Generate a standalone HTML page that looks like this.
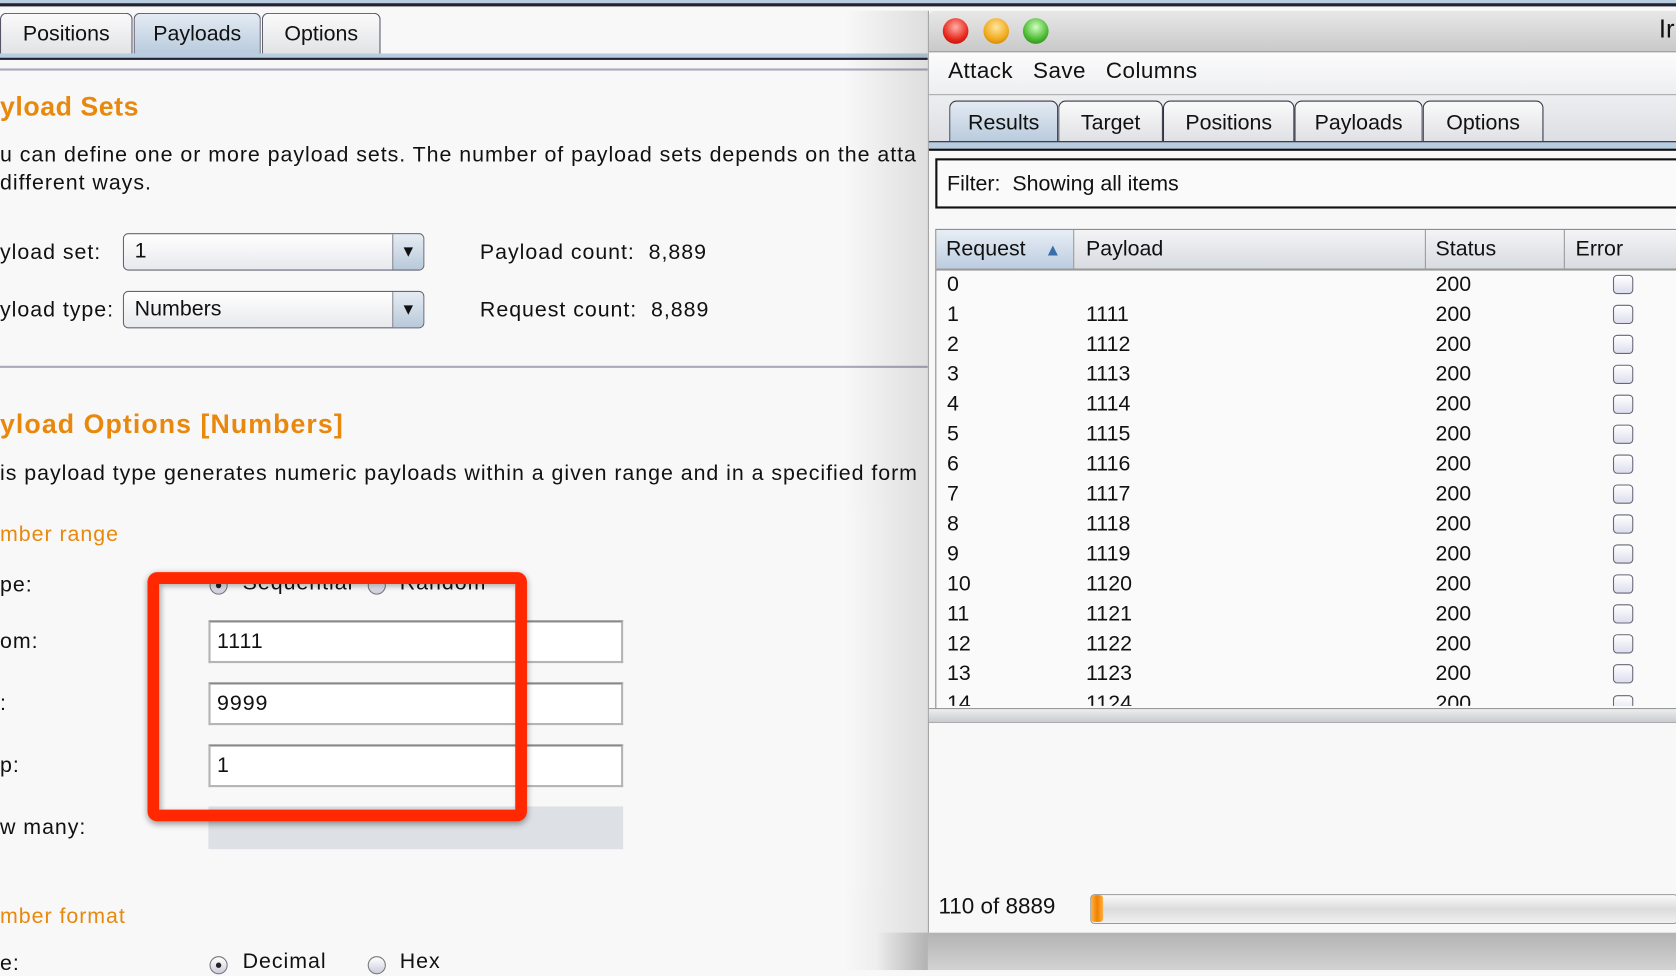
<!DOCTYPE html>
<html><head><meta charset="utf-8"><style>
html,body{margin:0;padding:0;width:1676px;height:970px;overflow:hidden;background:#f8f8f8}
#s{position:absolute;left:0;top:0;width:1568px;height:907px;transform:scale(1.0689,1.0695);transform-origin:0 0;font-family:"Liberation Sans",sans-serif;color:#111;font-size:20px}
.a{position:absolute;white-space:nowrap}
.l{letter-spacing:0.9px}
.or{color:#e8880c}
.tab{position:absolute;top:12px;height:38px;border:1px solid #556;border-bottom:none;border-radius:6px 6px 0 0;background:linear-gradient(#fafafa,#e2e3e6);font-size:20px;line-height:38px;text-align:center;box-sizing:border-box}
.combo{position:absolute;left:115px;width:282px;height:35px;border:1px solid #667;border-radius:5px;background:linear-gradient(#fff,#e8e9ec);box-sizing:border-box;font-size:20px;line-height:33px;padding-left:10px}
.combo:after{content:"▼";position:absolute;right:0;top:0;width:28px;height:33px;border-left:1px solid #667;text-align:center;font-size:15px;background:linear-gradient(#e6ecf3,#b8c9da);border-radius:0 4px 4px 0}
.inp{position:absolute;left:195px;width:388px;height:40px;border:2px solid #b5b5b5;border-top-color:#888;background:#fff;box-sizing:border-box;font-size:20px;line-height:36px;padding-left:6px}
.rad{position:absolute;width:17px;height:17px;border-radius:50%;border:1px solid #777;background:linear-gradient(#fff,#ccd);box-sizing:border-box}
.dot:after{content:"";position:absolute;left:5px;top:5px;width:5px;height:5px;border-radius:50%;background:#222}
.rt{position:absolute;height:38px;top:94px;border:1.5px solid #334;border-bottom:none;border-radius:7px 7px 0 0;background:linear-gradient(#fafafa,#e0e1e5);font-size:20px;line-height:40px;text-align:center;box-sizing:border-box}
.tab.sel,.rt.sel{background:linear-gradient(#e4ebf3,#b9cbdd)}
.row{position:absolute;left:886px;height:28px;line-height:28px;font-size:20px}
.cb{position:absolute;left:1509px;width:19px;height:18px;border:1.5px solid #667;border-radius:4px;background:linear-gradient(#fff,#dde);box-sizing:border-box}
</style></head><body><div id="s">
<div class="a" style="left:0;top:0;width:1568px;height:3px;background:#b9cde0"></div>
<div class="a" style="left:0;top:3px;width:1568px;height:3px;background:#223"></div>
<div class="tab" style="left:0;width:124px">Positions</div>
<div class="tab sel" style="left:125px;width:119px">Payloads</div>
<div class="tab" style="left:245px;width:111px">Options</div>
<div class="a" style="left:0;top:50px;width:868px;height:4px;background:#b9cde0;border-bottom:2px solid #223"></div>
<div class="a" style="left:0;top:64px;width:868px;height:2px;background:#aab"></div>
<div class="a or" style="left:0;top:86px;font-size:25px;font-weight:bold;letter-spacing:0.5px">yload Sets</div>
<div class="a l" style="left:0;top:134px">u can define one or more payload sets. The number of payload sets depends on the atta</div>
<div class="a l" style="left:0;top:160px">different ways.</div>
<div class="a l" style="left:0;top:225px">yload set:</div>
<div class="combo" style="top:218px">1</div>
<div class="a l" style="left:449px;top:225px">Payload count:&nbsp; 8,889</div>
<div class="a l" style="left:0;top:279px">yload type:</div>
<div class="combo" style="top:272px">Numbers</div>
<div class="a l" style="left:449px;top:279px">Request count:&nbsp; 8,889</div>
<div class="a" style="left:0;top:342px;width:868px;height:2px;background:#aab"></div>
<div class="a or" style="left:0;top:383px;font-size:25px;font-weight:bold;letter-spacing:1px">yload Options [Numbers]</div>
<div class="a l" style="left:0;top:432px">is payload type generates numeric payloads within a given range and in a specified form</div>
<div class="a or l" style="left:0;top:489px">mber range</div>
<div class="a l" style="left:0;top:536px">pe:</div>
<div class="rad dot" style="left:196px;top:539px"></div><div class="a l" style="left:227px;top:534px">Sequential</div>
<div class="rad" style="left:344px;top:539px"></div><div class="a l" style="left:374px;top:534px">Random</div>
<div class="a l" style="left:0;top:589px">om:</div><div class="inp l" style="top:580px">1111</div>
<div class="a" style="left:0;top:647px">:</div><div class="inp l" style="top:638px">9999</div>
<div class="a l" style="left:0;top:705px">p:</div><div class="inp" style="top:696px">1</div>
<div class="a l" style="left:0;top:763px">w many:</div>
<div class="a" style="left:195px;top:754px;width:388px;height:40px;background:#dde0e5"></div>
<div class="a" style="left:138px;top:535px;width:355px;height:233px;border:11px solid #ff2800;border-radius:9px;box-sizing:border-box;box-shadow:0 2px 6px rgba(0,0,0,.4),inset 2px 2px 5px rgba(0,0,0,.3)"></div>
<div class="a or l" style="left:0;top:846px">mber format</div>
<div class="a l" style="left:0;top:890px">e:</div>
<div class="rad dot" style="left:196px;top:894px"></div><div class="a l" style="left:227px;top:888px">Decimal</div>
<div class="rad" style="left:344px;top:894px"></div><div class="a l" style="left:374px;top:888px">Hex</div>
<!-- shadows -->
<div class="a" style="left:790px;top:10px;width:78px;height:897px;background:linear-gradient(90deg,rgba(0,0,0,0),rgba(0,0,0,.10))"></div>
<div class="a" style="left:868px;top:872px;width:700px;height:35px;background:linear-gradient(rgba(0,0,0,.28),rgba(0,0,0,.15))"></div>
<div class="a" style="left:820px;top:872px;width:48px;height:35px;background:linear-gradient(90deg,rgba(0,0,0,0),rgba(0,0,0,.2))"></div>
<!-- window -->
<div class="a" style="left:868px;top:10px;width:700px;height:862px;background:#f8f8f8;border-left:1px solid #999"></div>
<div class="a" style="left:869px;top:10px;width:699px;height:38px;background:linear-gradient(#e8e8e8,#c9c9c9);border-bottom:1px solid #777;border-radius:5px 0 0 0"></div>
<div class="a" style="left:882px;top:17px;width:24px;height:24px;border-radius:50%;background:radial-gradient(circle at 50% 35%,#ffb0a8,#e6261a 60%,#a00);"></div>
<div class="a" style="left:920px;top:17px;width:24px;height:24px;border-radius:50%;background:radial-gradient(circle at 50% 35%,#ffe6a0,#f0a818 60%,#b07000);"></div>
<div class="a" style="left:957px;top:17px;width:24px;height:24px;border-radius:50%;background:radial-gradient(circle at 50% 35%,#d0ffc0,#48b830 60%,#207010);"></div>
<div class="a" style="left:1552px;top:14px;font-size:24px">Ir</div>
<div class="a" style="left:869px;top:49px;width:699px;height:85px;background:linear-gradient(#fcfcfc,#dcdee3)"></div>
<div class="a" style="left:869px;top:88px;width:699px;height:1px;background:#aaa"></div>
<div class="a" style="left:887px;top:55px;font-size:21px;letter-spacing:0.4px">Attack&nbsp;&nbsp; Save&nbsp;&nbsp; Columns</div>
<div class="rt sel" style="left:888px;width:102px">Results</div>
<div class="rt" style="left:990px;width:98px">Target</div>
<div class="rt" style="left:1088px;width:123px">Positions</div>
<div class="rt" style="left:1211px;width:120px">Payloads</div>
<div class="rt" style="left:1331px;width:113px">Options</div>
<div class="a" style="left:869px;top:132px;width:699px;height:6px;background:#b9cde0;border-top:1.5px solid #223;border-bottom:2px solid #111"></div>
<div class="a" style="left:875px;top:148px;width:700px;height:47px;border:2px solid #111;background:#fafafa;box-sizing:border-box;font-size:20px;line-height:44px;padding-left:9px">Filter:&nbsp; Showing all items</div>
<div class="a" style="left:875px;top:214px;width:700px;height:447px;border:1px solid #888;background:#fafafa;overflow:hidden">
 <div class="a" style="left:0;top:0;width:700px;height:36px;background:linear-gradient(#f4f4f6,#d8dbe0);border-bottom:2px solid #999;font-size:20px;line-height:36px">
  <div class="a" style="left:0;width:129px;height:36px;background:linear-gradient(#e8eef5,#bccde0);border-right:1px solid #999;padding-left:9px;box-sizing:border-box">Request <span style="color:#3a6ea8;margin-left:12px;font-size:16px">▲</span></div>
  <div class="a" style="left:130px;padding-left:10px">Payload</div>
  <div class="a" style="left:457px;width:1px;height:36px;background:#999"></div>
  <div class="a" style="left:467px">Status</div>
  <div class="a" style="left:587px;width:1px;height:36px;background:#999"></div>
  <div class="a" style="left:598px">Error</div>
 </div>
</div>
<div class="row" style="top:252px">0</div><div class="row" style="top:252px;left:1343px">200</div><div class="cb" style="top:257px"></div>
<div class="row" style="top:280px">1</div><div class="row" style="top:280px;left:1016px">1111</div><div class="row" style="top:280px;left:1343px">200</div><div class="cb" style="top:285px"></div>
<div class="row" style="top:308px">2</div><div class="row" style="top:308px;left:1016px">1112</div><div class="row" style="top:308px;left:1343px">200</div><div class="cb" style="top:313px"></div>
<div class="row" style="top:336px">3</div><div class="row" style="top:336px;left:1016px">1113</div><div class="row" style="top:336px;left:1343px">200</div><div class="cb" style="top:341px"></div>
<div class="row" style="top:364px">4</div><div class="row" style="top:364px;left:1016px">1114</div><div class="row" style="top:364px;left:1343px">200</div><div class="cb" style="top:369px"></div>
<div class="row" style="top:392px">5</div><div class="row" style="top:392px;left:1016px">1115</div><div class="row" style="top:392px;left:1343px">200</div><div class="cb" style="top:397px"></div>
<div class="row" style="top:420px">6</div><div class="row" style="top:420px;left:1016px">1116</div><div class="row" style="top:420px;left:1343px">200</div><div class="cb" style="top:425px"></div>
<div class="row" style="top:448px">7</div><div class="row" style="top:448px;left:1016px">1117</div><div class="row" style="top:448px;left:1343px">200</div><div class="cb" style="top:453px"></div>
<div class="row" style="top:476px">8</div><div class="row" style="top:476px;left:1016px">1118</div><div class="row" style="top:476px;left:1343px">200</div><div class="cb" style="top:481px"></div>
<div class="row" style="top:504px">9</div><div class="row" style="top:504px;left:1016px">1119</div><div class="row" style="top:504px;left:1343px">200</div><div class="cb" style="top:509px"></div>
<div class="row" style="top:532px">10</div><div class="row" style="top:532px;left:1016px">1120</div><div class="row" style="top:532px;left:1343px">200</div><div class="cb" style="top:537px"></div>
<div class="row" style="top:560px">11</div><div class="row" style="top:560px;left:1016px">1121</div><div class="row" style="top:560px;left:1343px">200</div><div class="cb" style="top:565px"></div>
<div class="row" style="top:588px">12</div><div class="row" style="top:588px;left:1016px">1122</div><div class="row" style="top:588px;left:1343px">200</div><div class="cb" style="top:593px"></div>
<div class="row" style="top:616px">13</div><div class="row" style="top:616px;left:1016px">1123</div><div class="row" style="top:616px;left:1343px">200</div><div class="cb" style="top:621px"></div>
<div class="a" style="left:876px;top:644px;width:692px;height:16px;overflow:hidden">
 <div class="row" style="top:0;left:10px">14</div><div class="row" style="top:0;left:140px">1124</div><div class="row" style="top:0;left:467px">200</div><div class="cb" style="top:6px;left:633px"></div>
</div>
<div class="a" style="left:869px;top:662px;width:699px;height:12px;background:linear-gradient(#eee,#c8cbd0);border-top:1px solid #999;border-bottom:1px solid #aaa"></div>
<div class="a" style="left:878px;top:836px;font-size:21px">110 of 8889</div>
<div class="a" style="left:1020px;top:836px;width:548px;height:26px;border:1px solid #999;border-radius:4px;background:linear-gradient(#fafafa,#dcdcdc 50%,#f0f0f0)"></div>
<div class="a" style="left:1021px;top:837px;width:11px;height:25px;border-radius:3px;background:linear-gradient(90deg,#ffb040,#f08000,#ffb040)"></div>
</div></body></html>
